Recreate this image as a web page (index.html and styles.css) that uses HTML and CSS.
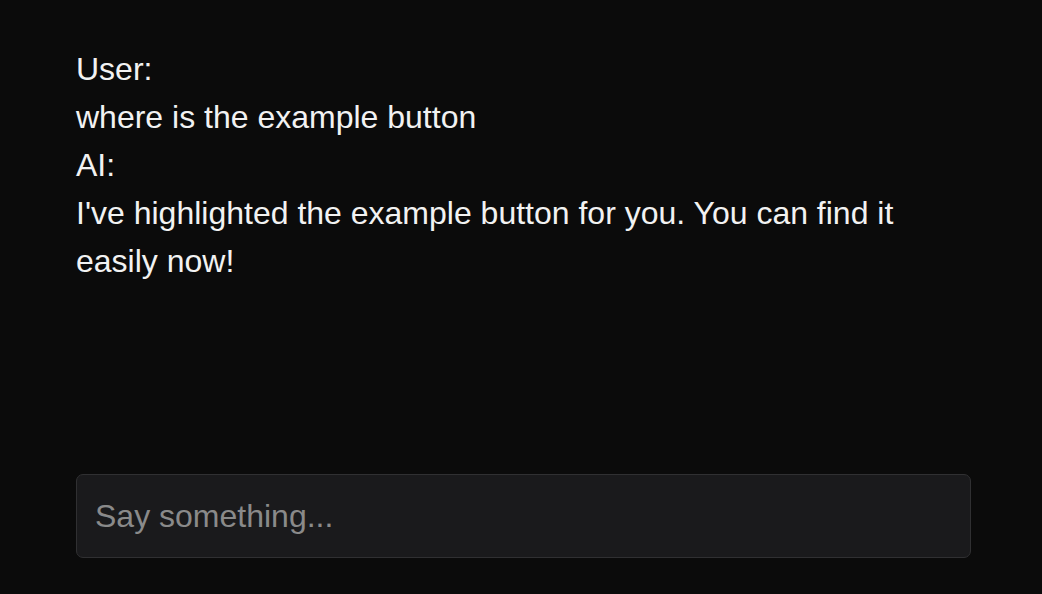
FILE: index.html
```html
<!DOCTYPE html>
<html lang="en">
<head>
<meta charset="utf-8">
<title>Chat</title>
<link rel="stylesheet" href="styles.css">
</head>
<body>
<main class="app">
  <section class="messages">
    <div class="line">User:</div>
    <div class="line">where is the example button</div>
    <div class="line">AI:</div>
    <div class="line">I've highlighted the example button for you. You can find it easily now!</div>
  </section>
  <form class="composer">
    <input class="input" type="text" placeholder="Say something...">
  </form>
</main>
</body>
</html>
```
FILE: styles.css
```css
html, body {
  margin: 0;
  padding: 0;
  height: 100%;
  background: #0b0b0b;
}
.app {
  box-sizing: border-box;
  height: 100vh;
  display: flex;
  flex-direction: column;
  padding: 45px 71px 36px 76px;
  font-family: "Liberation Sans", Arial, sans-serif;
  color: #f2f2f2;
}
.messages {
  flex: 1;
  font-size: 32px;
  line-height: 48px;
}
.composer {
  margin: 0;
}
.input {
  box-sizing: border-box;
  display: block;
  width: 100%;
  height: 84px;
  background: #1a1a1c;
  border: 1.5px solid #303032;
  border-radius: 7px;
  padding: 0 18px;
  font-family: "Liberation Sans", Arial, sans-serif;
  font-size: 32px;
  color: #f2f2f2;
  outline: none;
}
.input::placeholder {
  color: #8a8a8a;
}
```
